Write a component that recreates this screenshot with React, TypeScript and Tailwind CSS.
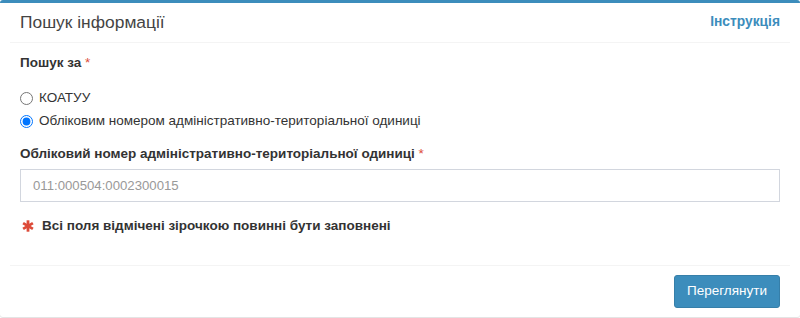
import React from "react";

function Asterisk() {
  return (
    <svg width="12" height="12" viewBox="0 0 12 12" className="shrink-0">
      <g stroke="#dd4b39" strokeWidth="2.8" strokeLinecap="butt">
        <line x1="6" y1="0.3" x2="6" y2="11.7" />
        <line x1="1.1" y1="3.15" x2="10.9" y2="8.85" />
        <line x1="1.1" y1="8.85" x2="10.9" y2="3.15" />
      </g>
    </svg>
  );
}

export default function App() {
  return (
    <div
      className="w-[800px] h-[318px] bg-white text-[13.5px] text-[#333]"
      style={{ fontFamily: '"Liberation Sans", Arial, sans-serif' }}
    >
      <div className="w-[800px] h-[317px] bg-white border-t-[3px] border-[#3c8dbc] rounded-[3px] shadow-[0_1px_1px_rgba(0,0,0,0.12)] flex flex-col">
        <div className="mx-[10px] px-[10px] pt-[10px] pb-[11px] border-b border-[#f4f4f4] flex items-center justify-between">
          <h3 className="text-[17.4px] leading-[18px] text-[#444] m-0">Пошук інформації</h3>
          <a className="font-bold text-[#3c8dbc] text-[13.8px] leading-[18px] cursor-pointer">Інструкція</a>
        </div>
        <div className="mx-[10px] px-[10px] pt-[10px] flex flex-col">
          <div className="font-bold leading-[20px]">
            Пошук за <span className="text-[#dd4b39] font-normal">*</span>
          </div>
          <label className="flex items-center gap-[6px] leading-[20px] mt-[15px]">
            <input type="radio" name="s" className="m-0 w-[13px] h-[13px]" />
            <span>КОАТУУ</span>
          </label>
          <label className="flex items-center gap-[6px] leading-[20px] mt-[3px]">
            <input type="radio" name="s" defaultChecked className="m-0 w-[13px] h-[13px]" />
            <span>Обліковим номером адміністративно-територіальної одиниці</span>
          </label>
          <div className="font-bold leading-[20px] mt-[13px]">
            Обліковий номер адміністративно-територіальної одиниці{" "}
            <span className="text-[#dd4b39] font-normal">*</span>
          </div>
          <input
            type="text"
            placeholder="011:000504:0002300015"
            className="mt-[5px] h-[33px] w-full border border-[#d2d6de] px-[12px] text-[13.2px] text-[#555] placeholder:text-[#999] outline-none"
          />
          <div className="flex items-center gap-[8px] mt-[14px] pl-[2px] font-bold leading-[20px]">
            <Asterisk />
            <span>Всі поля відмічені зірочкою повинні бути заповнені</span>
          </div>
        </div>
        <div className="mt-auto mx-[10px] px-[10px] pt-[9px] pb-[9px] border-t border-[#f4f4f4] flex justify-end">
          <button className="h-[33px] px-[12px] rounded-[3px] bg-[#3c8dbc] border border-[#367fa9] text-white text-[13.5px]">
            Переглянути
          </button>
        </div>
      </div>
    </div>
  );
}
